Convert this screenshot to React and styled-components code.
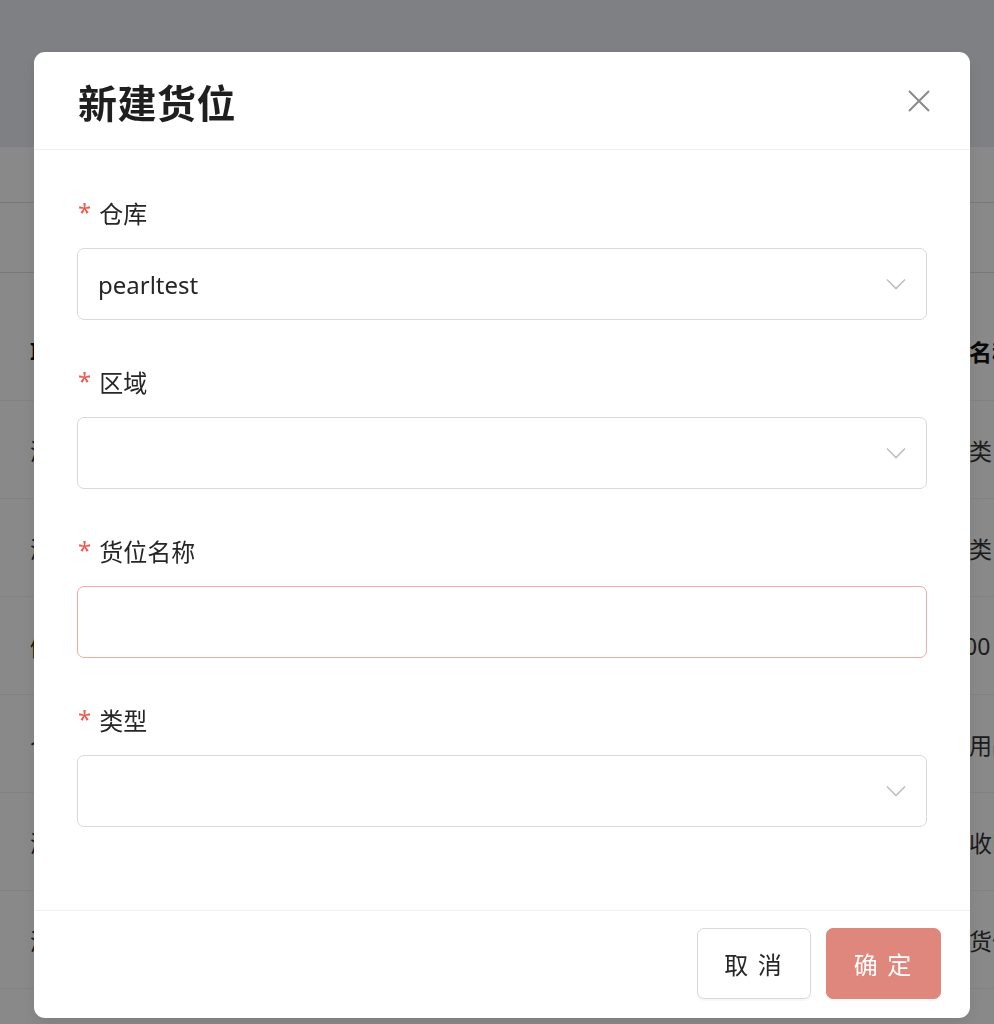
import React from "react";
import styled, { createGlobalStyle } from "styled-components";

const GlobalStyle = createGlobalStyle`
  html, body {
    margin: 0;
    padding: 0;
    overflow: hidden;
  }
  body {
    font-family: "Noto Sans", "Noto Sans CJK SC", sans-serif;
    color: #262626;
  }
`;

const Page = styled.div`
  height: 1024px;
  overflow: hidden;
  background: #fafafa;
`;

const TopBar = styled.div`
  height: 147px;
  background: #e6e9ee;
`;

const FilterRow = styled.div`
  height: ${(p) => p.h}px;
  border-bottom: 1px solid #dcdcdc;
  box-sizing: border-box;
`;

const Table = styled.div`
  margin-top: 28px;
`;

const Row = styled.div`
  display: grid;
  grid-template-columns: 893px 1fr;
  align-items: center;
  height: ${(p) => (p.head ? 100 : 98)}px;
  padding-left: 30px;
  box-sizing: border-box;
  border-bottom: 1px solid #ececec;
  font-size: 23px;
  font-weight: ${(p) => (p.head ? 700 : 400)};
  color: ${(p) => (p.head ? "#111" : "#333")};
`;

const Cell = styled.div`
  white-space: nowrap;
  overflow: hidden;
`;

const Overlay = styled.div`
  position: fixed;
  inset: 0;
  background: rgba(0, 0, 0, 0.45);
  display: flex;
  align-items: flex-start;
  padding: 52px 0 0 34px;
`;

const Modal = styled.div`
  width: 936px;
  height: 966px;
  background: #fff;
  border-radius: 11px;
  display: flex;
  flex-direction: column;
  overflow: hidden;
  box-shadow: 0 6px 16px rgba(0, 0, 0, 0.08);
`;

const Header = styled.div`
  height: 97px;
  flex: none;
  display: flex;
  align-items: center;
  justify-content: space-between;
  padding: 0 40px 0 44px;
  border-bottom: 1px solid #f0f0f0;
`;

const Title = styled.h2`
  margin: 0;
  font-size: 39px;
  font-weight: 700;
  color: #1f1f1f;
  letter-spacing: 0.5px;
  font-family: "Noto Sans CJK SC", sans-serif;
`;

const CloseButton = styled.button`
  border: none;
  background: none;
  padding: 0;
  width: 22px;
  height: 22px;
  display: flex;
  cursor: pointer;
`;

const Body = styled.div`
  flex: 1;
  padding: 44px 43px 0 43px;
  display: flex;
  flex-direction: column;
`;

const Item = styled.div`
  display: flex;
  flex-direction: column;
  gap: 18px;
  margin-bottom: 43px;
`;

const Label = styled.label`
  display: flex;
  align-items: center;
  height: 36px;
  padding-left: 1px;
  font-size: 24px;
  color: #262626;
  font-family: "Noto Sans CJK SC", sans-serif;
`;

const Star = styled.span`
  color: #ee5a52;
  font-size: 24px;
  line-height: 1;
  margin-right: 8px;
  font-family: "Noto Sans", sans-serif;
`;

const Field = styled.div`
  height: 72px;
  box-sizing: border-box;
  border: 1px solid ${(p) => (p.error ? "#efab9f" : "#d9d9d9")};
  border-radius: 7px;
  display: flex;
  align-items: center;
  justify-content: space-between;
  padding: 0 20px 0 20px;
  font-size: 24px;
  color: #262626;
`;

const Footer = styled.div`
  height: 108px;
  flex: none;
  border-top: 1px solid #f0f0f0;
  display: flex;
  justify-content: flex-end;
  align-items: flex-start;
  gap: 15px;
  padding: 17px 29px 0 0;
  box-sizing: border-box;
`;

const Button = styled.button`
  width: ${(p) => (p.primary ? 115 : 114)}px;
  height: 71px;
  border-radius: 7px;
  border: 1px solid ${(p) => (p.primary ? "#e0877d" : "#d9d9d9")};
  background: ${(p) => (p.primary ? "#e0877d" : "#fff")};
  color: ${(p) => (p.primary ? "#fff" : "#262626")};
  font-size: 24px;
  font-family: "Noto Sans CJK SC", sans-serif;
  letter-spacing: 2px;
  box-shadow: 0 2px 0 rgba(0, 0, 0, 0.03);
  cursor: pointer;
`;

function Chevron() {
  return (
    <svg width="20" height="12" viewBox="0 0 20 12">
      <polyline
        points="1,1.5 10,10.5 19,1.5"
        fill="none"
        stroke="#bfbfbf"
        strokeWidth="1.6"
      />
    </svg>
  );
}

function CloseIcon() {
  return (
    <svg width="22" height="22" viewBox="0 0 22 22">
      <path d="M1 1 L21 21 M21 1 L1 21" stroke="#8a8a8a" strokeWidth="2" />
    </svg>
  );
}

function FormItem({ label, value, select, error }) {
  return (
    <Item>
      <Label>
        <Star>*</Star>
        {label}
      </Label>
      <Field error={error}>
        <span>{value}</span>
        {select && <Chevron />}
      </Field>
    </Item>
  );
}

const rows = [
  ["测试货位一", "其它类"],
  ["测试货位二", "耗材类"],
  ["储存区", "A1000"],
  ["个人仓", "常规用品"],
  ["测试暂存", "待验收区"],
  ["测试默认", "默认货位"],
  ["测试", "其它"],
];

export default function App() {
  return (
    <>
      <GlobalStyle />
      <Page>
        <TopBar />
        <FilterRow h={56} />
        <FilterRow h={70} />
        <Table>
          <Row head>
            <Cell>ID</Cell>
            <Cell>货位名称</Cell>
          </Row>
          {rows.map((r, i) => (
            <Row key={i}>
              <Cell>{r[0]}</Cell>
              <Cell>{r[1]}</Cell>
            </Row>
          ))}
        </Table>
      </Page>
      <Overlay>
        <Modal>
          <Header>
            <Title>新建货位</Title>
            <CloseButton>
              <CloseIcon />
            </CloseButton>
          </Header>
          <Body>
            <FormItem label="仓库" value="pearltest" select />
            <FormItem label="区域" select />
            <FormItem label="货位名称" error />
            <FormItem label="类型" select />
          </Body>
          <Footer>
            <Button>取 消</Button>
            <Button primary>确 定</Button>
          </Footer>
        </Modal>
      </Overlay>
    </>
  );
}
